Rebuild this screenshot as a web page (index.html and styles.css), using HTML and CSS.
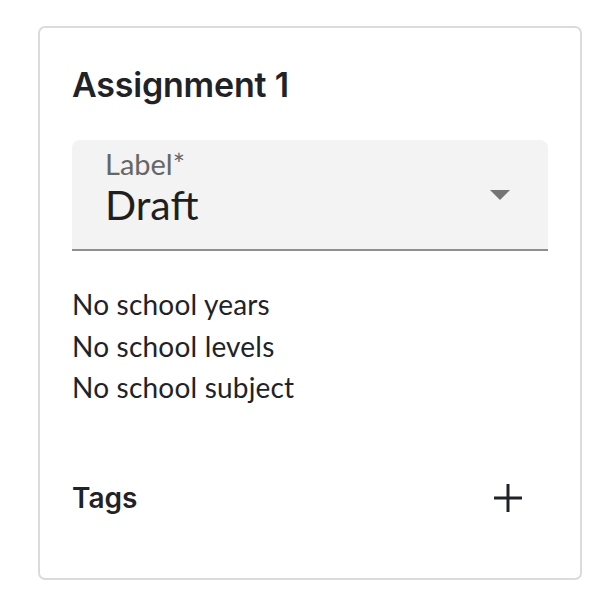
FILE: index.html
```html
<!DOCTYPE html>
<html lang="en">
<head>
    <meta charset="UTF-8">
    <meta name="viewport" content="width=device-width, initial-scale=1.0">
    <title>Assignment 1</title>
    <link rel="stylesheet" href="styles.css">
</head>
<body>
    <div class="assignment-card">
        <h2 class="card-title">Assignment 1</h2>

        <div class="select-field">
            <div class="select-text">
                <span class="select-label">Label*</span>
                <span class="select-value">Draft</span>
            </div>
            <svg class="select-arrow" width="20" height="10" viewBox="0 0 20 10">
                <path d="M0 0 L20 0 L10 10 Z" fill="#757575"/>
            </svg>
        </div>

        <ul class="meta-list">
            <li>No school years</li>
            <li>No school levels</li>
            <li>No school subject</li>
        </ul>

        <div class="tags-row">
            <span class="tags-title">Tags</span>
            <button type="button" class="add-btn" aria-label="Add tag">
                <svg width="28" height="28" viewBox="0 0 28 28">
                    <path d="M14 0 V28 M0 14 H28" stroke="#1f2328" stroke-width="3"/>
                </svg>
            </button>
        </div>
    </div>
</body>
</html>
```

FILE: styles.css
```css
body {
    margin: 0;
    background-color: white;
    font-family: Lato, "Noto Sans", sans-serif;
    color: #1f2328;
}
.assignment-card {
    box-sizing: border-box;
    width: 544px;
    height: 554px;
    margin: 26px 0 0 38px;
    padding: 33px 32px 0 32px;
    border: 2px solid #d9dcdf;
    border-radius: 7px;
    display: flex;
    flex-direction: column;
}
.card-title {
    margin: 0;
    font-family: Inter, sans-serif;
    font-weight: 600;
    font-size: 34px;
    line-height: 48px;
    letter-spacing: -0.2px;
}
.select-field {
    margin-top: 31px;
    height: 109px;
    background-color: #f3f3f3;
    border-bottom: 2px solid #8f8f8f;
    border-radius: 8px 8px 0 0;
    display: flex;
    align-items: center;
    justify-content: space-between;
    padding: 0 38px 0 33px;
}
.select-text {
    display: flex;
    flex-direction: column;
    align-self: flex-start;
    padding-top: 7px;
}
.select-label {
    font-size: 29px;
    line-height: 34px;
    color: #666;
}
.select-value {
    font-size: 41px;
    line-height: 48px;
    color: #1f1f1f;
}
.meta-list {
    list-style: none;
    margin: 33px 0 0 0;
    padding: 0;
    font-size: 28px;
    line-height: 41.5px;
    letter-spacing: 0.2px;
}
.tags-row {
    margin-top: 69px;
    display: flex;
    align-items: center;
    justify-content: space-between;
}
.tags-title {
    font-family: Inter, sans-serif;
    font-weight: 600;
    font-size: 28px;
    line-height: 40px;
}
.add-btn {
    background: none;
    border: none;
    padding: 0;
    margin-right: 26px;
    width: 28px;
    height: 28px;
    cursor: pointer;
}
.add-btn svg {
    display: block;
}
```
